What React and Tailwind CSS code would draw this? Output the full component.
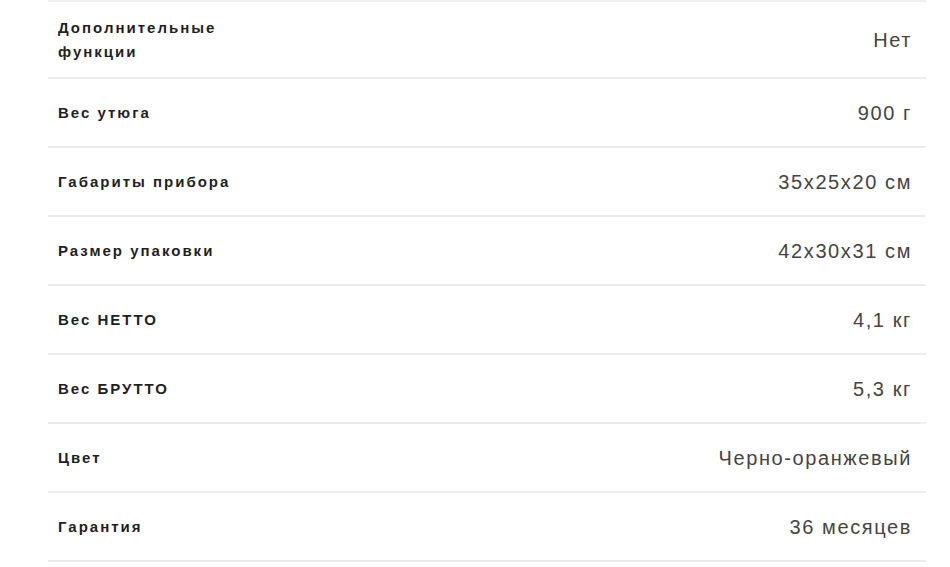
const specs = [
  { label: ["Дополнительные", "функции"], value: "Нет" },
  { label: ["Вес утюга"], value: "900 г" },
  { label: ["Габариты прибора"], value: "35x25x20 см" },
  { label: ["Размер упаковки"], value: "42x30x31 см" },
  { label: ["Вес НЕТТО"], value: "4,1 кг" },
  { label: ["Вес БРУТТО"], value: "5,3 кг" },
  { label: ["Цвет"], value: "Черно-оранжевый" },
  { label: ["Гарантия"], value: "36 месяцев" },
];

export default function App() {
  return (
    <div className="w-[950px] h-[567px] bg-white overflow-hidden font-['Liberation_Sans',Arial,sans-serif]">
      <div className="ml-[48px] w-[878px] border-t-2 border-[#efefef]">
        {specs.map((row, i) => (
          <div
            key={i}
            className={`flex items-center justify-between border-b-2 border-[#ececec] pl-[10px] pr-[14px] ${
              i === 0 ? "h-[77px]" : "h-[69px]"
            }`}
          >
            <div className="text-[15px] font-bold leading-[24px] tracking-[2px] text-[#1f1f1f]">
              {row.label.map((l, j) => (
                <div key={j}>{l}</div>
              ))}
            </div>
            <div className="text-[20px] tracking-[1.6px] text-[#444]">{row.value}</div>
          </div>
        ))}
      </div>
    </div>
  );
}
